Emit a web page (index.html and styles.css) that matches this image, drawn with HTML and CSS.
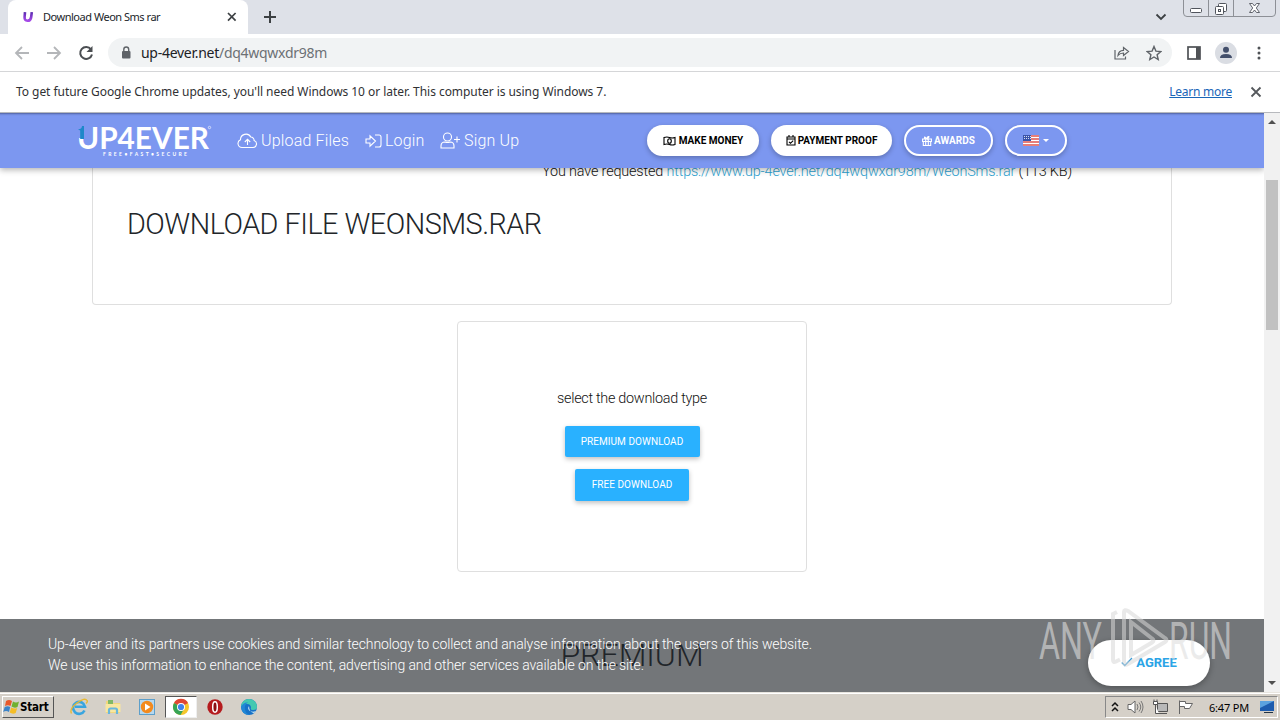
FILE: index.html
```html
<!DOCTYPE html>
<html lang="en">
<head>
    <meta charset="UTF-8">
    <meta name="viewport" content="width=device-width, initial-scale=1.0">
    <title>Download Weon Sms rar</title>
    <link rel="stylesheet" href="styles.css">
</head>
<body>

    <!-- Tab strip -->
    <div class="tabstrip">
        <div class="tab">
            <svg class="favicon" width="12" height="12" viewBox="0 0 12 12"><defs><linearGradient id="fav" x1="0" x2="0" y1="0" y2="1"><stop offset="0" stop-color="#5a2bb0"/><stop offset="1" stop-color="#a64be8"/></linearGradient></defs><path d="M3 1.2 L2.6 6 Q2.4 9.8 5.4 9.8 Q8.8 9.8 9.2 6 L9.8 1.2" fill="none" stroke="url(#fav)" stroke-width="2.6"/></svg>
            <span class="tab-title">Download Weon Sms rar</span>
            <svg class="tab-close" width="10" height="10" viewBox="0 0 10 10"><path d="M1 1l7.6 7.6M8.6 1L1 8.6" stroke="#3c4043" stroke-width="1.7"/></svg>
        </div>
        <svg class="new-tab" width="14" height="14" viewBox="0 0 14 14"><path d="M7 1v12M1 7h12" stroke="#3c4043" stroke-width="2"/></svg>
        <svg class="tab-search" width="12" height="8" viewBox="0 0 12 8"><path d="M1.5 1.5L6 6l4.5-4.5" fill="none" stroke="#3c4043" stroke-width="1.8"/></svg>
        <svg class="win-buttons" width="93" height="17" viewBox="0 0 93 17">
            <path d="M.5 0v13q0 3.5 3.5 3.500h85q3.500 0 3.500-3.500V0M25.500 0v16M50.500 0v16" fill="none" stroke="#8d9096"/>
            <rect x="7.500" y="8.500" width="11" height="4" rx="1" fill="#fff" stroke="#50545c"/>
            <rect x="35.500" y="3.500" width="8" height="8" rx="1" fill="#fff" stroke="#50545c"/>
            <rect x="32.500" y="6.500" width="8" height="8" rx="1" fill="#fff" stroke="#50545c"/>
            <rect x="35.500" y="9.500" width="2" height="2" fill="none" stroke="#50545c"/>
            <path d="M66.500 3.500h3l2 2.500 2-2.500h3l-3.200 4.500 3.200 4.500h-3l-2-2.500-2 2.500h-3l3.200-4.500z" fill="#fff" stroke="#50545c" stroke-width=".9"/>
        </svg>
    </div>

    <!-- Toolbar -->
    <div class="toolbar">
        <svg class="nav-icon" width="16" height="14" viewBox="0 0 16 14"><path d="M15 7H2M8 1L2 7l6 6" fill="none" stroke="#b4b6b9" stroke-width="1.8"/></svg>
        <svg class="nav-icon" width="16" height="14" viewBox="0 0 16 14"><path d="M1 7h13M8 1l6 6-6 6" fill="none" stroke="#b4b6b9" stroke-width="1.8"/></svg>
        <svg class="nav-icon" width="16" height="16" viewBox="0 0 16 16"><path d="M13 4.300A6 6 0 1 0 14 9.500" fill="none" stroke="#4b4e52" stroke-width="2"/><path d="M14.500 1v6h-6z" fill="#4b4e52"/></svg>
        <div class="omnibox">
            <svg width="10" height="13" viewBox="0 0 10 13"><rect x="1" y="5" width="8.500" height="7.500" rx="1" fill="#5f6368"/><path d="M2.800 5V3.500a2.450 2.450 0 0 1 4.900 0V5" fill="none" stroke="#5f6368" stroke-width="1.400"/></svg>
            <span class="url">up-4ever.net<span>/dq4wqwxdr98m</span></span>
            <svg class="share" width="16" height="14" viewBox="0 0 16 14"><path d="M1 4v9h10.500v-2.500M4 9.500Q4.500 4.500 9.500 4.300V1.500L14.500 5.500 9.500 9.500V7Q6 7 4 9.500z" fill="none" stroke="#5f6368" stroke-width="1.200"/></svg>
            <svg width="16" height="16" viewBox="0 0 16 16"><path d="M8 1.500l1.900 4.600 4.900.4-3.700 3.200 1.100 4.800L8 12l-4.200 2.500 1.100-4.800L1.200 6.500l4.900-.4z" fill="none" stroke="#5f6368" stroke-width="1.400"/></svg>
        </div>
        <svg class="side-panel" width="14" height="14" viewBox="0 0 14 14"><rect x="1" y="1" width="12" height="12" fill="none" stroke="#4f5256" stroke-width="1.700"/><path d="M9 1h4v12H9z" fill="#4f5256"/></svg>
        <svg class="profile" width="22" height="22" viewBox="0 0 22 22"><circle cx="11" cy="11" r="11" fill="#dadde3"/><circle cx="11" cy="7.800" r="3" fill="#434f6b"/><path d="M5 16q0-4 6-4t6 4z" fill="#434f6b"/></svg>
        <svg class="menu-dots" width="4" height="14" viewBox="0 0 4 14"><circle cx="2" cy="2" r="1.500" fill="#4f5256"/><circle cx="2" cy="7" r="1.500" fill="#4f5256"/><circle cx="2" cy="12" r="1.500" fill="#4f5256"/></svg>
    </div>

    <div class="infobar">
        <span class="info-text">To get future Google Chrome updates, you'll need Windows 10 or later. This computer is using Windows 7.</span>
        <a href="#" class="learn-more">Learn more</a>
        <svg width="12" height="12" viewBox="0 0 12 12"><path d="M1.500 1.500l9 9M10.500 1.500l-9 9" stroke="#55585c" stroke-width="1.800"/></svg>
    </div>

    <div class="viewport">
        <div class="page">
            <nav class="navbar">
                <svg class="logo" width="136" height="36" viewBox="0 0 136 36">
                    <text class="logo-name" x="0" y="26" textLength="132" lengthAdjust="spacingAndGlyphs">UP4EVER</text>
                    <path d="M0 2h9v13H0z" fill="#7c97f0"/>
                    <path d="M1 6.500Q5 6 5 3h2v13H3.200V7.500z" fill="#1e88c9"/>
                    <text class="logo-tag" x="26" y="32.500" textLength="84">FREE•FAST•SECURE</text>
                    <circle cx="132.500" cy="4.500" r="1.200" fill="none" stroke="#fff" stroke-width=".6"/>
                </svg>
                <a href="#" class="nav-link link-upload">
                    <svg width="21" height="16" viewBox="0 0 21 16"><path d="M5 14.500a4 4 0 0 1-1.500-7.700A5.500 5.500 0 0 1 13.800 4a3.300 3.300 0 0 1 3.300 3.500 3.600 3.600 0 0 1-1 7zM10.500 12V6.500M7.800 9l2.700-2.700L13.200 9"/></svg>
                    <span>Upload Files</span>
                </a>
                <a href="#" class="nav-link link-login">
                    <svg width="17" height="14" viewBox="0 0 17 14"><path d="M1 5h4V1.800L10.500 7 5 12.200V9H1zM10 1h4q2 0 2 2v8q0 2-2 2h-4"/></svg>
                    <span>Login</span>
                </a>
                <a href="#" class="nav-link link-signup">
                    <svg width="21" height="17" viewBox="0 0 21 17"><circle cx="7.500" cy="5" r="4"/><path d="M1 16v-2q0-4 4-4 2.500 1 5 0 4 0 4 4v2zM17 4.500v6M14 7.500h6"/></svg>
                    <span>Sign Up</span>
                </a>
                <a href="#" class="pill pill-money">
                    <svg width="13" height="10" viewBox="0 0 13 10"><path d="M1 1.500q3-1 5.500 0t5.500 0v7q-3 1-5.500 0T1 8.500z"/><ellipse cx="6.500" cy="5" rx="1.800" ry="2.300"/></svg>
                    <span>MAKE MONEY</span>
                </a>
                <a href="#" class="pill pill-proof">
                    <svg width="10" height="11" viewBox="0 0 10 11"><path d="M1 2h8v8H1zM1 4h8M3 0v2.500M7 0v2.500M3 6.800l1.500 1.500 2.700-2.700"/></svg>
                    <span>PAYMENT PROOF</span>
                </a>
                <a href="#" class="pill outline pill-awards">
                    <svg width="10" height="10" viewBox="0 0 10 10"><path d="M.6 3h8.800v2.500H.6zM1.300 5.500h7.400v4H1.300zM3.700 3v6.500M6.300 3v6.500M5 3Q2.500 3 2.500 1.500T5 3q0-2.500 1.500-2.500T5 3"/></svg>
                    <span>AWARDS</span>
                </a>
                <a href="#" class="pill outline pill-lang">
                    <svg class="flag" width="16" height="11" viewBox="0 0 16 11"><path d="M0 0h16v11H0z" fill="#fff"/><path d="M0 1h16M0 4h16M0 7h16M0 10h16" stroke="#e0544e" stroke-width="1.500"/><path d="M0 0h8v6H0z" fill="#3a53a8"/><path d="M1 1.500h7M1 3.500h7" stroke="#fff" stroke-width=".8" stroke-dasharray="1 1"/></svg>
                    <span class="caret"></span>
                </a>
            </nav>

            <main>
                <section class="card file-card">
                    <p class="requested">You have requested <a href="#">https://www.up-4ever.net/dq4wqwxdr98m/WeonSms.rar</a> (113 KB)</p>
                    <h1>DOWNLOAD FILE WEONSMS.RAR</h1>
                </section>
                <section class="card type-card">
                    <p>select the download type</p>
                    <button class="btn btn-premium">PREMIUM DOWNLOAD</button>
                    <button class="btn btn-free">FREE DOWNLOAD</button>
                </section>
                <h2>PREMIUM</h2>
            </main>

            <div class="cookie-bar">
                <p>Up-4ever and its partners use cookies and similar technology to collect and analyse information about the users of this website.<br>
                We use this information to enhance the content, advertising and other services available on the site.</p>
                <button class="agree">
                    <svg width="12" height="10" viewBox="0 0 12 10"><path d="M.8 5.500l3 3L11 1" fill="none" stroke="#3a9bd6" stroke-width="1.300"/></svg>
                    <span>AGREE</span>
                </button>
            </div>
        </div>
        <div class="scrollbar">
            <svg width="8" height="4" viewBox="0 0 8 4"><path d="M0 4l4-4 4 4z" fill="#505050"/></svg>
            <div class="thumb"></div>
            <svg class="down" width="8" height="4" viewBox="0 0 8 4"><path d="M0 0l4 4 4-4z" fill="#505050"/></svg>
        </div>

        <!-- Watermark over the page -->
        <svg class="watermark" width="200" height="66" viewBox="0 0 200 66">
            <text x="2" y="52" textLength="63" lengthAdjust="spacingAndGlyphs">ANY</text>
            <text x="132" y="52" textLength="63" lengthAdjust="spacingAndGlyphs">RUN</text>
            <path d="M80 5l-4 2v46q0 3 3 1.500l4-2M87 5v50q0 4 4 2l37-22q3-2 0-4L91 4q-4-2-4 1z"/>
            <path d="M94 15v33l21-12.500q3-2 0-4z"/>
        </svg>
    </div>

    <!-- Taskbar -->
    <div class="taskbar">
        <div class="start">
            <svg width="17" height="16" viewBox="0 0 17 16"><path d="M3 2q3-2 6 0L7.500 7Q5 5.500 2 7z" fill="#e8582a"/><path d="M10 2.500q3 1.800 6 0L14.500 8q-3 1.500-6-.5z" fill="#71b02f"/><path d="M1.700 8q3-1.500 5.500 0L6 13q-3-1.800-5.800 0z" fill="#3b83c8"/><path d="M8.200 8.500q3 1.800 6 .5l-1.500 5q-3 1.500-6-.5z" fill="#f5bd25"/></svg>
            <span>Start</span>
        </div>
        <div class="launch">
            <svg width="18" height="18" viewBox="0 0 18 18"><path d="M14.500 12.500A6 6 0 1 1 15 8.800H5" fill="none" stroke="#39a5df" stroke-width="2.600"/><path d="M1.500 15.500Q-1 11 7 5t10-2.500q1 1-1 3" fill="none" stroke="#e8b932" stroke-width="1.400"/></svg>
        </div>
        <div class="launch">
            <svg width="18" height="18" viewBox="0 0 18 18"><path d="M2 3h5l1 2h8v10H2z" fill="#f2d77c"/><path d="M4 2h5v4H4z" fill="#80b966"/><path d="M1.500 6h15v8h-15z" fill="#f8e7a0"/><path d="M5 16v-4q0-1.500 1.500-1.500h5q1.500 0 1.500 1.500v4" fill="none" stroke="#69b7dc" stroke-width="2.200"/></svg>
        </div>
        <div class="launch">
            <svg width="18" height="18" viewBox="0 0 18 18"><rect x="1.500" y="1.500" width="15" height="15" fill="#b6d8ef" stroke="#5d9fca"/><circle cx="9" cy="9" r="6.200" fill="#f38a1d"/><path d="M7 5.500l5.500 3.500L7 12.500z" fill="#fff"/></svg>
        </div>
        <div class="launch active">
            <svg width="18" height="18" viewBox="0 0 18 18"><circle cx="9" cy="9" r="8" fill="#f5c62b"/><path d="M9 9L2 5a8 8 0 0 1 14 0z" fill="#df4634"/><path d="M9 9L2 5a8 8 0 0 0 6.500 12L12 11z" fill="#37a455"/><circle cx="9" cy="9" r="4" fill="#fff"/><circle cx="9" cy="9" r="3.100" fill="#4083ec"/></svg>
        </div>
        <div class="launch">
            <svg width="18" height="18" viewBox="0 0 18 18"><circle cx="9" cy="9" r="7.700" fill="#b51b1e"/><ellipse cx="9" cy="9" rx="2.300" ry="5.200" fill="#8d1014" stroke="#fff" stroke-width="1.500"/></svg>
        </div>
        <div class="launch">
            <svg width="18" height="18" viewBox="0 0 18 18"><circle cx="9" cy="9" r="8" fill="#1672c8"/><path d="M1 9a8 8 0 0 1 16 0q0 3-4 3-3 0-2-2 0-4-4-4-4 0-6 3z" fill="#43c9b1"/><path d="M1 9q2-5 7-4.500-4 2-3 7Q6 16 10 17 2 17 1 9z" fill="#2188d6"/><path d="M9 8q-2 3 1 5 3 1.500 6 0-1 1.500-2 2-5-1-5-7z" fill="#d8eef5"/></svg>
        </div>
        <div class="tray">
            <svg width="8" height="12" viewBox="0 0 8 12"><path d="M1 5l3-3 3 3M1 10l3-3 3 3" fill="none" stroke="#111" stroke-width="1.500"/></svg>
            <svg width="17" height="16" viewBox="0 0 17 16"><path d="M1 5.500h3L8 2v12l-4-3.500H1z" fill="#fff" stroke="#666"/><path d="M10 5q2 3 0 6M12 3.500q3.500 4.500 0 9M14 2q4 6 0 12" fill="none" stroke="#777"/></svg>
            <svg width="17" height="16" viewBox="0 0 17 16"><path d="M5.500 4.500h10v8h-10zM7 14.500h8" fill="#b8b8b8" stroke="#555"/><path d="M1.500 2.500h4v3h-4zM3.500 6v8.500H7M2 .5v2M5 .5v2" fill="#fff" stroke="#555"/></svg>
            <svg width="17" height="16" viewBox="0 0 17 16"><path d="M2.500 15V1.500M2.500 2.500h6v2h7l-3 5h-5v-2h-5" fill="#fff" stroke="#666"/></svg>
            <span class="clock">6:47 PM</span>
            <svg width="16" height="14" viewBox="0 0 16 14"><path d="M1 1h14v10H1z" fill="#1d5cae"/><path d="M1 1h14L1 8z" fill="#5ba2df"/><path d="M5 12h9v1H5z" fill="#234"/></svg>
        </div>
    </div>

</body>
</html>
```
FILE: styles.css
```css
* {
    box-sizing: border-box;
}

body {
    margin: 0;
    width: 1280px;
    height: 720px;
    overflow: hidden;
    display: flex;
    flex-direction: column;
    background: #fff;
    font-family: Roboto, sans-serif;
    color: #212529;
}

svg {
    display: block;
    flex: none;
}

a {
    text-decoration: none;
}

p, h1, h2 {
    margin: 0;
    white-space: nowrap;
}

/* Browser window */
.tabstrip {
    height: 34px;
    flex: none;
    display: flex;
    align-items: center;
    background: #dee1e8;
    padding-left: 8px;
}

.tab {
    width: 240px;
    height: 34px;
    display: flex;
    align-items: center;
    background: #fff;
    border-radius: 8px 8px 0 0;
    padding: 0 11px 0 14px;
    font-family: "Noto Sans", sans-serif;
    font-size: 11px;
}

.tab-title {
    margin-left: 9px;
    padding-bottom: 2px;
    letter-spacing: -0.48px;
}

.tab-close {
    margin-left: auto;
}

.new-tab {
    margin-left: 15px;
}

.tab-search {
    margin-left: auto;
}

.win-buttons {
    align-self: flex-start;
    margin: 0 4px 0 16px;
}

.toolbar {
    height: 38px;
    flex: none;
    display: flex;
    align-items: center;
    border-bottom: 1px solid #d5d6d8;
    padding: 0 19px 0 14px;
}

.nav-icon {
    margin-right: 16px;
}

.omnibox {
    width: 1064px;
    height: 29px;
    margin-left: -2px;
    display: flex;
    align-items: center;
    background: #f1f3f4;
    border-radius: 15px;
    padding: 0 10px 0 13px;
}

.url {
    font-family: "Noto Sans", sans-serif;
    font-size: 14px;
    letter-spacing: -0.28px;
    color: #202124;
    margin-left: 10px;
}

.url span {
    color: #6c7074;
}

.share {
    margin-left: auto;
    margin-right: 16px;
}

.side-panel {
    margin-left: 15px;
}

.profile {
    margin-left: 14px;
}

.menu-dots {
    margin-left: auto;
}

.infobar {
    height: 41px;
    flex: none;
    display: flex;
    align-items: center;
    border-bottom: 1px solid #b7b9bd;
    padding: 0 18px 0 16px;
    font-family: "Noto Sans", sans-serif;
    font-size: 12px;
    letter-spacing: -0.05px;
    color: #303134;
}

.info-text, .learn-more {
    padding-bottom: 2px;
}

.learn-more {
    margin-left: auto;
    margin-right: 18px;
    letter-spacing: -0.25px;
    color: #1a66b8;
    text-decoration: underline;
}

/* Page */
.viewport {
    height: 579px;
    flex: none;
    display: flex;
    position: relative;
}

.page {
    width: 1264px;
    position: relative;
    overflow: hidden;
    display: flex;
    flex-direction: column;
}

.navbar {
    height: 55px;
    flex: none;
    display: flex;
    align-items: center;
    padding-left: 77px;
    background: #7c97f0;
    box-shadow: inset 0 3px 2px -2px rgba(50, 60, 100, 0.6), 0 2px 6px rgba(0, 0, 0, 0.3);
    z-index: 1;
}

.logo-name {
    font: 700 30px Lato, sans-serif;
    fill: #fff;
}

.logo-tag {
    font: 700 5px Lato, sans-serif;
    fill: #fff;
}

.nav-link {
    display: flex;
    align-items: center;
    color: #fff;
    font-size: 16px;
    font-weight: 300;
    letter-spacing: 0.18px;
    white-space: nowrap;
    gap: 3px;
}

.nav-link svg, .pill svg:not(.flag) {
    fill: none;
    stroke: currentColor;
    stroke-width: 1.1;
}

.link-upload {
    width: 112px;
    margin-left: 24px;
}

.link-login {
    width: 60px;
    margin-left: 16px;
}

.link-signup {
    width: 80px;
    margin-left: 15px;
}

.pill {
    height: 31px;
    display: flex;
    align-items: center;
    justify-content: center;
    gap: 2px;
    margin-left: 12px;
    background: #fff;
    border-radius: 16px;
    box-shadow: 0 2px 5px rgba(0, 0, 0, 0.25);
    color: #000;
    font-size: 10px;
    font-weight: 700;
    white-space: nowrap;
}

.pill-money {
    width: 112px;
    margin-left: 127px;
    gap: 3px;
}

.pill-proof {
    width: 121px;
}

.outline {
    background: transparent;
    border: 2px solid #fff;
    color: #fff;
}

.pill-awards {
    width: 89px;
}

.pill-lang {
    width: 62px;
    gap: 4px;
}

.caret {
    border: 3px solid transparent;
    border-top-color: #fff;
    border-bottom: 0;
}

main {
    display: flex;
    flex-direction: column;
    align-items: center;
}

.card {
    border: 1px solid #dfdfdf;
    border-radius: 4px;
}

.file-card {
    width: 1080px;
    height: 147px;
    margin-top: -10px;
    border-top: 0;
    padding: 4px 99px 0 34px;
}

.requested {
    font-size: 14.4px;
    font-weight: 300;
    letter-spacing: -0.155px;
    line-height: 20px;
    text-align: right;
    color: #111;
}

.requested a {
    color: #2d9fd0;
}

h1 {
    margin-top: 22px;
    font-size: 28.8px;
    font-weight: 300;
    letter-spacing: -0.5px;
    line-height: 40px;
}

.type-card {
    width: 350px;
    height: 251px;
    margin-top: 16px;
    padding-top: 67px;
    display: flex;
    flex-direction: column;
    align-items: center;
}

.type-card p {
    font-size: 14.4px;
    font-weight: 300;
    letter-spacing: -0.28px;
    line-height: 20px;
    color: #111;
}

.btn {
    border: 0;
    padding: 0;
    background: #29b1ff;
    border-radius: 2px;
    box-shadow: 0 2px 5px rgba(0, 0, 0, 0.25);
    color: #fff;
    font: 10px Roboto, sans-serif;
    letter-spacing: 0.06px;
}

.btn-premium {
    width: 135px;
    height: 31px;
    margin-top: 17px;
}

.btn-free {
    width: 114px;
    height: 32px;
    margin-top: 12px;
    padding-bottom: 2px;
}

h2 {
    margin-top: 65px;
    font-size: 32px;
    font-weight: 300;
    line-height: 36px;
}

.cookie-bar {
    position: absolute;
    left: 0;
    right: 0;
    bottom: 0;
    height: 73px;
    display: flex;
    align-items: flex-start;
    justify-content: space-between;
    padding: 15px 54px 0 48px;
    background: rgba(33, 38, 43, 0.63);
    color: #fff;
    z-index: 2;
}

.cookie-bar p {
    font-size: 14px;
    font-weight: 300;
    letter-spacing: -0.107px;
    line-height: 21px;
}

.agree {
    width: 122px;
    height: 46px;
    margin-top: 6px;
    padding-bottom: 3px;
    display: flex;
    align-items: center;
    justify-content: center;
    gap: 3px;
    border: 0;
    border-radius: 23px;
    background: #fff;
    box-shadow: 0 2px 6px rgba(0, 0, 0, 0.3);
    color: #2ba4e6;
    font: 700 13px Roboto, sans-serif;
}

.scrollbar {
    width: 16px;
    display: flex;
    flex-direction: column;
    align-items: center;
    background: #f1f1f1;
    padding: 7px 0;
}

.thumb {
    width: 12px;
    height: 150px;
    margin-top: 56px;
    background: #c1c1c1;
}

.down {
    margin-top: auto;
}

.watermark {
    position: absolute;
    left: 1037px;
    top: 494px;
    z-index: 3;
}

.watermark text {
    font: 400 52px Roboto, sans-serif;
    fill: rgba(222, 222, 222, 0.6);
}

.watermark path {
    fill: none;
    stroke: rgba(215, 215, 215, 0.55);
    stroke-width: 4;
}

/* Taskbar */
.taskbar {
    height: 28px;
    flex: none;
    display: flex;
    align-items: center;
    background: #d5d0c8;
    border-top: 1px solid #e8e5df;
    box-shadow: inset 0 1px #fff;
    padding: 1px 2px 0;
}

.start {
    width: 52px;
    height: 22px;
    display: flex;
    align-items: center;
    border: 1px solid;
    border-color: #fff #555 #555 #fff;
    margin-right: 9px;
    font: 700 11.5px "DejaVu Sans Condensed", "DejaVu Sans", sans-serif;
    letter-spacing: -0.2px;
    color: #000;
}

.launch {
    width: 32px;
    height: 22px;
    margin-right: 2px;
    display: flex;
    align-items: center;
    justify-content: center;
}

.launch.active {
    background: #fff;
    border: 1px solid;
    border-color: #555 #eee #eee #555;
}

.tray {
    width: 173px;
    height: 22px;
    margin-left: auto;
    display: flex;
    align-items: center;
    gap: 8px;
    border: 1px solid;
    border-color: #888 #fff #fff #888;
    padding-left: 5px;
}

.clock {
    width: 42px;
    margin-left: 7px;
    font: 11px "Noto Sans", sans-serif;
    letter-spacing: -0.2px;
    white-space: nowrap;
    color: #000;
}
```
